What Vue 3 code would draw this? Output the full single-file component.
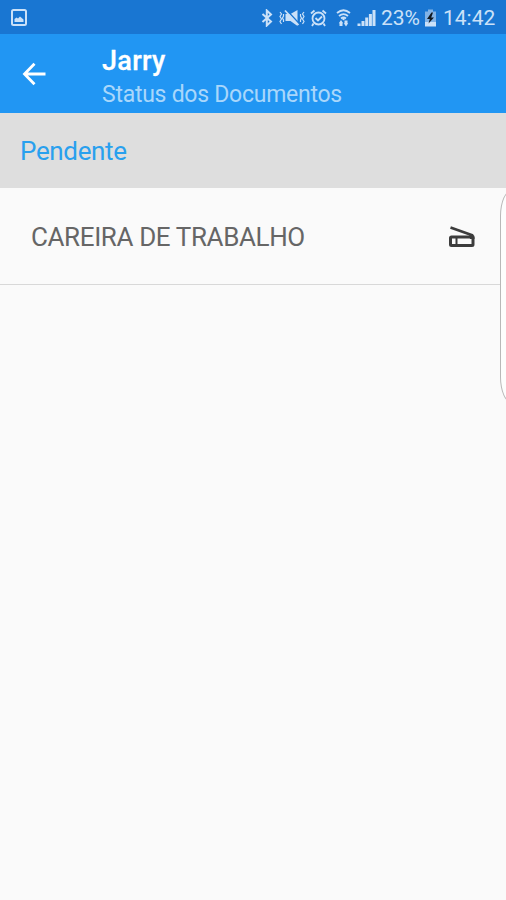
<script setup>
  import {ref} from "vue";

  const user = ref("Jarry");
  const battery = ref(23);
  const time = ref("14:42");

  const sections = ref([
    {
      title: "Pendente",
      documents: [
        { id: 1, name: "CAREIRA DE TRABALHO" }
      ]
    }
  ]);
</script>

<template>
  <main>
    <div class="status-bar">
      <svg class="picture" width="16" height="17" viewBox="0 0 16 17">
        <rect x="1" y="1" width="14" height="15" rx="1.5" fill="none" stroke="currentColor" stroke-width="2" />
        <path d="M3.5 13V10l2-1.500 1.500 1 2-2 3.500 3v2.500z" fill="currentColor" />
      </svg>
      <div class="status-icons">
        <svg width="12" height="18" viewBox="0 0 12 18">
          <path d="M1.500 5l8.500 7.500-4.200 4V1.500l4.200 4-8.500 7.500" fill="none" stroke="currentColor" stroke-width="2" />
        </svg>
        <svg class="mute" width="26" height="18" viewBox="0 0 26 18">
          <path d="M6.500 5h5l7-4v16l-7-5h-5z" fill="currentColor" />
          <path d="M7.500 1l13 14" stroke="#1976d2" stroke-width="1.600" />
          <path d="M6 1.500l13.500 14.500" stroke="currentColor" stroke-width="1.800" />
          <path d="M1 3l1.500 2L1 7.500 2.500 10 1 12.500 2.500 15M4.500 5v2l-1 2 1 2v2M25 3l-1.500 2L25 7.500 23.500 10l1.500 2.500-1.500 2.500M21.500 5v2l1 2-1 2v2" fill="none" stroke="currentColor" stroke-width="1.200" />
        </svg>
        <svg class="alarm" width="17" height="18" viewBox="0 0 17 18">
          <circle cx="8.500" cy="9.500" r="6" fill="none" stroke="currentColor" stroke-width="1.800" />
          <path d="M1 4.500L4.500 1.500M16 4.500L12.500 1.500M3.500 14.500L2 17M13.500 14.500L15 17M5.500 9l2.500 2.500 4-4" fill="none" stroke="currentColor" stroke-width="1.800" />
        </svg>
        <svg class="wifi" width="15" height="18" viewBox="0 0 15 18">
          <path d="M1 4q6.500-5.500 13 0M3 7q4.500-3.800 9 0M5 9.500q2.500-2 5 0" fill="none" stroke="currentColor" stroke-width="1.800" />
          <circle cx="7.500" cy="10" r="1.200" fill="currentColor" />
          <path d="M5 11l2.200 3.200H6.500V17h-3v-2.800H2.800zM10 17.500l-2.200-3.200h.7V11.500h3v2.800h.7z" fill="currentColor" />
        </svg>
        <svg class="signal" width="19" height="18" viewBox="0 0 19 18">
          <path d="M.5 14.500h3V17h-3zM4.500 12h3v5h-3zM8.200 8.500h3V17h-3zM11.900 5h3v12h-3zM15.500 1h3v16h-3z" fill="currentColor" />
        </svg>
        <span class="percent">{{ battery }}%</span>
        <svg class="battery" width="13" height="18" viewBox="0 0 13 18">
          <path d="M4 0.500h5v2h3V13H1V2.500h3z" fill="#82b3e6" />
          <path d="M1 13h11v4.500H1z" fill="currentColor" />
          <path d="M7.500 3.500L3 10h2.800L4.500 14.500 10 8.500H7.200L9 3.500z" fill="#101820" />
        </svg>
        <span class="time">{{ time }}</span>
      </div>
    </div>

    <header>
      <button class="back" aria-label="Voltar">
        <svg width="24" height="24" viewBox="0 0 24 24">
          <path d="M23.500 12H3M12.500 1.700L2.500 12l10 10.300" fill="none" stroke="currentColor" stroke-width="2.800" />
        </svg>
      </button>
      <div class="titles">
        <h1>{{ user }}</h1>
        <p>Status dos Documentos</p>
      </div>
    </header>

    <section v-for="section in sections" :key="section.title">
      <h2>{{ section.title }}</h2>
      <ul>
        <li v-for="doc in section.documents" :key="doc.id">
          <span>{{ doc.name }}</span>
          <svg width="26" height="22" viewBox="0 0 26 22">
            <path d="M1.500 1.500L24 9.500" fill="none" stroke="currentColor" stroke-width="2.600" />
            <rect x="1.500" y="11" width="22.500" height="8.500" rx="1" fill="none" stroke="currentColor" stroke-width="3" />
            <path d="M7.500 11v9" stroke="currentColor" stroke-width="2" />
            <path d="M20 8l4.500 1q1 .5 1 2v2H21z" fill="currentColor" />
          </svg>
        </li>
      </ul>
    </section>

    <div class="edge-handle"></div>
  </main>
</template>

<style>
  body {
    margin: 0;
    background-color: #fafafa;
  }
</style>

<style scoped>
  main {
    position: relative;
    height: 100vh;
    overflow: hidden;
    background-color: #fafafa;
    font-family: Roboto, "Liberation Sans", sans-serif;
  }

  .status-bar {
    height: 34px;
    box-sizing: border-box;
    padding: 1px 10px 0 11px;
    display: flex;
    justify-content: space-between;
    align-items: center;
    background-color: #1976d2;
    color: #cbe1f8;
  }

  .status-icons {
    display: flex;
    align-items: center;
    font-size: 21px;
    line-height: 24px;
    white-space: nowrap;
  }

  .status-icons svg {
    flex: none;
  }

  .mute {
    margin-left: 6px;
  }

  .alarm {
    margin-left: 5px;
  }

  .wifi {
    margin-left: 9px;
  }

  .signal {
    margin-left: 6px;
  }

  .percent {
    width: 39px;
    margin-left: 5px;
  }

  .battery {
    margin-left: 4px;
  }

  .time {
    width: 53px;
    margin-left: 6px;
  }

  header {
    height: 79px;
    display: flex;
    background-color: #2196f3;
  }

  .back {
    width: 24px;
    height: 24px;
    margin: 28px 0 0 22px;
    padding: 0;
    border: none;
    background: none;
    color: white;
  }

  .back svg {
    display: block;
  }

  .titles {
    margin-left: 56px;
  }

  h1 {
    margin: 11px 0 0;
    font-size: 27px;
    line-height: 32px;
    font-weight: 500;
    letter-spacing: 0.3px;
    color: white;
    -webkit-text-stroke: 0.3px white;
  }

  .titles p {
    margin: 3px 0 0;
    font-size: 23px;
    line-height: 29px;
    letter-spacing: -0.26px;
    color: #a9d7fb;
  }

  h2 {
    height: 75px;
    margin: 0;
    padding-left: 20px;
    font-size: 26px;
    line-height: 76px;
    font-weight: 400;
    letter-spacing: -0.35px;
    color: #29a0ee;
    background-color: #dedede;
  }

  ul {
    margin: 0;
    padding: 0;
    list-style: none;
  }

  li {
    height: 97px;
    box-sizing: border-box;
    padding: 2px 31px 0;
    display: flex;
    justify-content: space-between;
    align-items: center;
    border-bottom: 1px solid #d8d8d8;
    font-size: 26px;
    letter-spacing: -0.38px;
    color: #666666;
  }

  li svg {
    color: #3c3c3c;
  }

  .edge-handle {
    position: absolute;
    top: 190px;
    right: -24px;
    width: 30px;
    height: 213px;
    box-sizing: border-box;
    border: 1px solid #b8b8b8;
    border-radius: 12px / 26px;
    background-color: #fdfdfd;
  }
</style>
